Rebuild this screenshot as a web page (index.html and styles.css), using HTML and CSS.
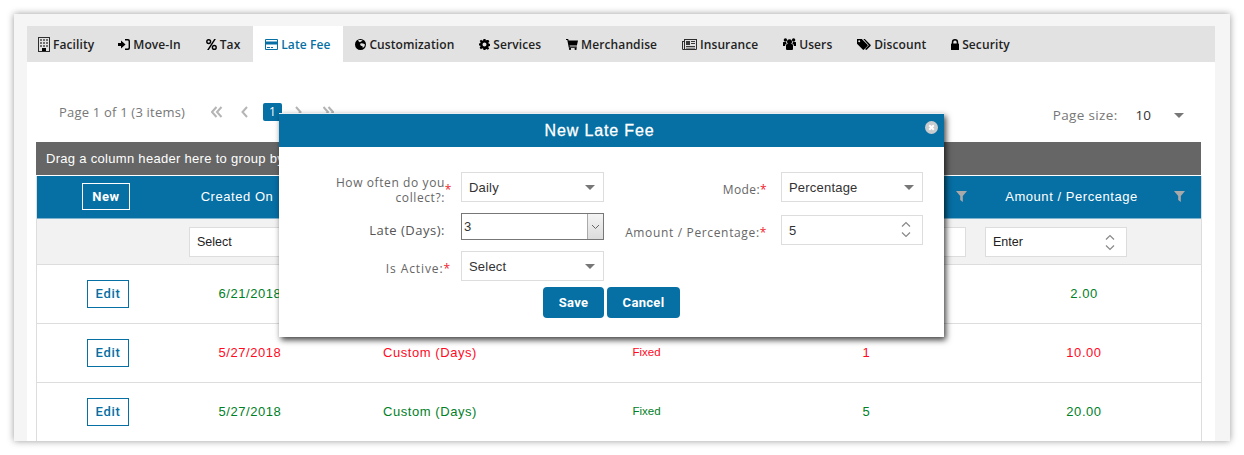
FILE: index.html
```html
<!DOCTYPE html>
<html lang="en">
<head>
    <meta charset="UTF-8">
    <title>New Late Fee</title>
    <link rel="stylesheet" href="styles.css">
</head>
<body>
    <div class="panel">
        <div class="content">
            <ul class="tabs">
                <li><svg class="ico" width="12" height="15" viewBox="0 0 12 15"><path fill-rule="evenodd" d="M0 0h12v15H0zM1 1v13h3v-3h4v3h3V1z" opacity=".8"/><path d="M2 2h2v2H2zM5 2h2v2H5zM8 2h2v2H8zM2 5h2v2H2zM5 5h2v2H5zM8 5h2v2H8zM2 8h2v2H2zM5 8h2v2H5zM8 8h2v2H8z" opacity=".5"/><path d="M4 11h4v3H4z"/></svg>Facility</li>
                <li><svg class="ico" width="12" height="11" viewBox="0 0 12 11"><path d="M0 4h3V1.500L7.500 5.500 3 9.500V7H0z"/><path d="M7 0h3a2 2 0 0 1 2 2v7a2 2 0 0 1-2 2H7V9.600h2.600a1 1 0 0 0 1-1V2.400a1 1 0 0 0-1-1H7z"/></svg>Move-In</li>
                <li><svg class="ico" width="11" height="11" viewBox="0 0 11 11"><path fill-rule="evenodd" d="M2.700 0a2.600 2.600 0 1 1 0 5.200A2.600 2.600 0 0 1 2.700 0zm0 1.400a1.200 1.200 0 1 0 0 2.400 1.200 1.200 0 0 0 0-2.400zM8.300 5.800a2.600 2.600 0 1 1 0 5.200 2.600 2.600 0 0 1 0-5.200zm0 1.400a1.200 1.200 0 1 0 0 2.400 1.200 1.200 0 0 0 0-2.400z"/><path d="M8.200 0h1.700L2.800 11H1.100z"/></svg>Tax</li>
                <li class="active"><svg class="ico" width="13" height="11" viewBox="0 0 13 11"><path fill="#066fa3" fill-rule="evenodd" d="M1 0h11a1 1 0 0 1 1 1v9a1 1 0 0 1-1 1H1a1 1 0 0 1-1-1V1a1 1 0 0 1 1-1zm0 5.500V10h11V5.500zM1 1v1.500h11V1z"/><path fill="#066fa3" d="M2 8h3v1H2zM6 8h2v1H6z"/></svg>Late Fee</li>
                <li><svg class="ico" width="11" height="11" viewBox="0 0 11 11"><path fill-rule="evenodd" d="M5.500 0a5.500 5.500 0 1 1 0 11 5.500 5.500 0 0 1 0-11zM3 1.800 4.800 3.200 6.500 2.200 7.700 1.500 6 1 3.800 1.100zM6.200 4.200 5 5 5.800 6.800 7.500 7.200 7.800 9 9.400 7.500 10 5.400 8.200 4.400z"/></svg>Customization</li>
                <li><svg class="ico" width="11" height="11" viewBox="0 0 11 11"><path fill-rule="evenodd" d="M4.500 0h2l.3 1.500 1-.5L9.400.9l1 1.700-1 1 .2 1 1.400.4v2L9.600 7.300l-.3 1 .9 1.200-1.400 1.300-1.200-.9-1 .4L6.500 11h-2l-.3-1.300-1-.4-1.200.9L.6 8.800l.9-1.200-.4-1L0 6.500v-2l1.200-.3.400-1-.9-1.100L2.100.8l1.100.9 1-.4zM5.500 3.500a2 2 0 1 0 0 4 2 2 0 0 0 0-4z"/></svg>Services</li>
                <li><svg class="ico" width="12" height="11" viewBox="0 0 12 11"><path d="M0 0h2.200l.4 1.400H12l-1.100 5H3.500l.3 1.200h7v1.100H2.800L1.300 1.100H0z"/><circle cx="4" cy="9.900" r="1.100"/><circle cx="9.600" cy="9.900" r="1.100"/></svg>Merchandise</li>
                <li><svg class="ico" width="15" height="11" viewBox="0 0 15 11"><path fill-rule="evenodd" d="M2 0h13v9.800a1.200 1.200 0 0 1-1.200 1.200H1.200A1.200 1.200 0 0 1 0 9.800V2h2zm1 1v9h10.800a.2.200 0 0 0 .2-.2V1zM1 3v6.800c0 .1.100.2.200.2H2V3z" opacity=".8"/><path d="M4 2h4v4H4zM9 2h4v1H9zM9 4h4v1H9zM4 7h9v1H4zM4 8.800h9v.7H4z" opacity=".75"/></svg>Insurance</li>
                <li><svg class="ico" width="13" height="12" viewBox="0 0 13 12"><circle cx="6.500" cy="3.800" r="2.500"/><circle cx="2.400" cy="2" r="1.700"/><circle cx="10.600" cy="2" r="1.700"/><path d="M3 7.300A1.500 1.500 0 0 1 4.500 6h4A1.500 1.500 0 0 1 10 7.300V11a1 1 0 0 1-1 1H4a1 1 0 0 1-1-1zM0 4.700C0 4 .5 4 1 4h1.900a3.500 3.500 0 0 0 1 1.500C2.700 5.700 2.200 6.400 2.100 8H0zM13 4.700c0-.7-.5-.7-1-.7h-1.900a3.500 3.500 0 0 1-1 1.500c1.200.2 1.700.9 1.800 2.500H13z"/></svg>Users</li>
                <li><svg class="ico" width="14" height="11" viewBox="0 0 14 11"><path fill-rule="evenodd" d="M0 0h4.800l5.700 5.700a1 1 0 0 1 0 1.300L7 10.600a1 1 0 0 1-1.300 0L0 4.800zM2.200 1.200a1 1 0 1 0 0 2 1 1 0 0 0 0-2z"/><path d="M6.300 0h1.500l5.700 5.700a1 1 0 0 1 0 1.300l-3.600 3.600a1 1 0 0 1-1.300 0l-.5-.5L11.800 6.300z"/></svg>Discount</li>
                <li><svg class="ico" width="8" height="11" viewBox="0 0 8 11"><path fill-rule="evenodd" d="M.8 4.500V3.200a3.200 3.200 0 0 1 6.400 0v1.300h.2a.6.600 0 0 1 .6.600v5.300a.6.600 0 0 1-.6.600H.6a.6.600 0 0 1-.6-.6V5.100a.6.600 0 0 1 .6-.6zm1.500 0h3.400V3.200a1.700 1.700 0 0 0-3.400 0z"/></svg>Security</li>
            </ul>

            <div class="pager">
                <span class="page-info">Page 1 of 1 (3 items)</span>
                <div class="page-links">
                    <svg class="chev" width="12" height="12" viewBox="0 0 12 12"><path d="M5.500 1 1 6l4.500 5M10.500 1 6 6l4.500 5"/></svg>
                    <svg class="chev prev" width="7" height="12" viewBox="0 0 7 12"><path d="M6 1 1.500 6 6 11"/></svg>
                    <span class="page-num">1</span>
                    <svg class="chev next" width="7" height="12" viewBox="0 0 7 12"><path d="M1 1l4.500 5L1 11"/></svg>
                    <svg class="chev last" width="12" height="12" viewBox="0 0 12 12"><path d="M1.500 1 6 6l-4.500 5M6.500 1 11 6l-4.500 5"/></svg>
                </div>
                <div class="page-size">
                    <span class="size-label">Page size:</span>
                    <span class="size-value">10</span>
                    <span class="caret"></span>
                </div>
            </div>

            <div class="group-bar">Drag a column header here to group by</div>

            <div class="grid">
                <div class="grid-row head">
                    <div class="cell"><button class="btn-new">New</button></div>
                    <div class="cell">Created On</div>
                    <div class="cell"></div>
                    <div class="cell"></div>
                    <div class="cell">
                        <svg class="funnel" width="11" height="11" viewBox="0 0 11 11"><path d="M0 0h11L6.800 5v6L4.200 9V5z"/></svg>
                    </div>
                    <div class="cell">Amount / Percentage
                        <svg class="funnel" width="11" height="11" viewBox="0 0 11 11"><path d="M0 0h11L6.800 5v6L4.200 9V5z"/></svg>
                    </div>
                </div>
                <div class="grid-row filters">
                    <div class="cell"></div>
                    <div class="cell"><div class="filter-box">Select</div></div>
                    <div class="cell"></div>
                    <div class="cell"></div>
                    <div class="cell"><div class="filter-box wide"></div></div>
                    <div class="cell"><div class="filter-box num">Enter
                        <svg class="spin" width="10" height="17" viewBox="0 0 10 17"><path d="M1 5.500 5 1.500l4 4M1 11.500l4 4 4-4"/></svg>
                    </div></div>
                </div>
                <div class="grid-row data green">
                    <div class="cell"><button class="btn-edit">Edit</button></div>
                    <div class="cell">6/21/2018</div>
                    <div class="cell"></div>
                    <div class="cell small"></div>
                    <div class="cell"></div>
                    <div class="cell">2.00</div>
                </div>
                <div class="grid-row data red">
                    <div class="cell"><button class="btn-edit">Edit</button></div>
                    <div class="cell">5/27/2018</div>
                    <div class="cell">Custom (Days)</div>
                    <div class="cell small">Fixed</div>
                    <div class="cell">1</div>
                    <div class="cell">10.00</div>
                </div>
                <div class="grid-row data green">
                    <div class="cell"><button class="btn-edit">Edit</button></div>
                    <div class="cell">5/27/2018</div>
                    <div class="cell">Custom (Days)</div>
                    <div class="cell small">Fixed</div>
                    <div class="cell">5</div>
                    <div class="cell">20.00</div>
                </div>
            </div>
        </div>
    </div>

    <div class="modal">
        <div class="modal-title">New Late Fee
            <svg class="close" width="13" height="13" viewBox="0 0 13 13"><circle cx="6.500" cy="6.500" r="6.500" fill="#c9ccce"/><path d="M4.200 4.200l4.600 4.600M8.800 4.200 4.200 8.800" stroke="#fff" stroke-width="2"/></svg>
        </div>
        <div class="modal-form">
            <div class="form-col">
                <div class="form-row">
                    <label class="two-line">How often do you<br>collect?:<i>*</i></label>
                    <div class="field">Daily<span class="caret"></span></div>
                </div>
                <div class="form-row late">
                    <label>Late (Days):</label>
                    <div class="field focus">3<span class="drop-btn"><svg width="9" height="6" viewBox="0 0 9 6"><path d="M1 1l3.500 3.500L8 1" fill="none" stroke="#666"/></svg></span></div>
                </div>
                <div class="form-row">
                    <label class="spaced">Is Active:<i>*</i></label>
                    <div class="field">Select<span class="caret"></span></div>
                </div>
            </div>
            <div class="form-col right">
                <div class="form-row">
                    <label>Mode:<i>*</i></label>
                    <div class="field">Percentage<span class="caret"></span></div>
                </div>
                <div class="form-row amount">
                    <label class="longer">Amount / Percentage:<i>*</i></label>
                    <div class="field">5
                        <svg class="spin" width="10" height="17" viewBox="0 0 10 17"><path d="M1 5.500 5 1.500l4 4M1 11.500l4 4 4-4"/></svg>
                    </div>
                </div>
            </div>
        </div>
        <div class="modal-actions">
            <button class="btn-save">Save</button>
            <button class="btn-save cancel">Cancel</button>
        </div>
    </div>
</body>
</html>
```

FILE: styles.css
```css
* {
    box-sizing: border-box;
}
html, body {
    margin: 0;
    height: 100%;
    overflow: hidden;
    background-color: #fff;
}
.panel {
    margin: 14px 14px 0 14px;
    height: 427px;
    padding: 12px 15px 0 13px;
    background-color: #f5f5f5;
    box-shadow: 0 0 7px rgba(0, 0, 0, 0.4);
}
.content {
    height: 415px;
    background-color: #fff;
    overflow: hidden;
}
.tabs {
    display: flex;
    margin: 0;
    padding: 0;
    list-style-type: none;
    height: 36px;
    background-color: #e2e2e2;
    font-family: "Open Sans", sans-serif;
    font-size: 12px;
    font-weight: 600;
    letter-spacing: 0.1px;
    color: #222;
}
.tabs li {
    display: flex;
    align-items: center;
    gap: 3px;
    padding: 0 12.45px;
}
.tabs li:first-child {
    padding-left: 11px;
    padding-right: 11.5px;
}
.tabs li.active {
    background-color: #fff;
    color: #066fa3;
}
.ico {
    flex-shrink: 0;
}
.pager {
    display: flex;
    align-items: center;
    height: 80px;
    padding: 20px 0 0 32px;
    font-family: "Open Sans", sans-serif;
    font-size: 13px;
    letter-spacing: 0.2px;
    color: #777;
}
.page-info {
    width: 152px;
}
.page-links {
    display: flex;
    align-items: center;
}
.chev {
    fill: none;
    stroke: #b5b5b5;
    stroke-width: 2;
}
.chev.prev {
    margin-left: 18px;
}
.chev.next {
    margin-left: 13px;
}
.chev.last {
    margin-left: 20px;
}
.page-num {
    width: 19px;
    height: 18px;
    margin-left: 15px;
    background-color: #066fa3;
    color: #fff;
    text-align: center;
    font-size: 12px;
    line-height: 18px;
    border-radius: 2px;
}
.page-size {
    display: flex;
    align-items: center;
    margin-left: auto;
    padding: 6px 31px 0 0;
    font-size: 13.5px;
    letter-spacing: 0;
}
.size-label {
    letter-spacing: 0.35px;
}
.size-value {
    margin: 0 23px 0 18px;
    color: #333;
}
.caret {
    display: inline-block;
    width: 0;
    height: 0;
    border-left: 5px solid transparent;
    border-right: 5px solid transparent;
    border-top: 5px solid #777;
}
.group-bar {
    width: 1165px;
    margin-left: 9px;
    height: 33px;
    padding-left: 10px;
    line-height: 33px;
    background-color: #666;
    color: #fff;
    font-family: "Liberation Sans", sans-serif;
    font-size: 13px;
    letter-spacing: 0.3px;
    white-space: nowrap;
    overflow: hidden;
}
.grid {
    width: 1166px;
    margin: 1px 0 0 9px;
    border-left: 1px solid #ddd;
    border-right: 1px solid #ddd;
    font-family: "Liberation Sans", sans-serif;
    font-size: 13px;
    letter-spacing: 0.55px;
}
.grid-row {
    display: grid;
    grid-template-columns: 138px 150px 210px 223px 217px 1fr;
    border-bottom: 1px solid #ddd;
}
.cell {
    position: relative;
    display: flex;
    align-items: center;
    justify-content: center;
}
.head {
    height: 43px;
    background-color: #066fa3;
    color: #fff;
    border-bottom: 1px solid #7fb2cc;
}
.head .cell {
    padding-bottom: 2px;
}
.head .cell:nth-child(2) {
    padding-right: 26px;
}
.head .cell:nth-child(6) {
    padding-right: 33px;
}
.btn-new {
    width: 48px;
    height: 27px;
    padding: 0;
    background: transparent;
    border: 1px solid #fff;
    color: #fff;
    font-family: "Roboto", sans-serif;
    font-size: 13px;
    font-weight: 700;
    letter-spacing: 0.6px;
}
.funnel {
    position: absolute;
    top: 15px;
    right: 9px;
    fill: #a9a9a9;
}
.head .cell:nth-child(5) .funnel {
    right: 8px;
}
.head .cell:nth-child(6) .funnel {
    right: 16px;
}
.filters {
    height: 46px;
    background-color: #f2f2f2;
}
.filters .cell {
    justify-content: flex-start;
    padding-left: 14px;
}
.filters .cell:nth-child(5) {
    padding-left: 10px;
}
.filters .cell:nth-child(6) {
    padding-left: 10px;
}
.filter-box {
    position: relative;
    display: flex;
    align-items: center;
    width: 142px;
    height: 30px;
    padding-left: 7px;
    background-color: #fff;
    border: 1px solid #ddd;
    color: #222;
    font-size: 12.5px;
    letter-spacing: 0;
}
.filter-box.wide {
    width: 198px;
}
.spin {
    position: absolute;
    top: 6px;
    right: 11px;
    fill: none;
    stroke: #888;
    stroke-width: 1.2;
}
.data {
    height: 59px;
}
.data .cell {
    padding-bottom: 2px;
}
.green {
    color: #008026;
}
.red {
    color: #ff0a1e;
}
.data .cell:first-child {
    padding: 0 0 0 4px;
}
.data .cell:nth-child(6) {
    padding-right: 8px;
}
.small {
    font-size: 11.5px;
    letter-spacing: 0;
}
.btn-edit {
    width: 42px;
    height: 28px;
    padding: 0 0 2px 0;
    background-color: #fff;
    border: 1px solid #066fa3;
    color: #066fa3;
    font-family: "Roboto", sans-serif;
    font-size: 13px;
    font-weight: 500;
    letter-spacing: 0.7px;
}
.modal {
    position: absolute;
    top: 113px;
    left: 279px;
    width: 665px;
    height: 224px;
    background-color: #fff;
    box-shadow: 2px 3px 6px rgba(0, 0, 0, 0.75);
}
.modal-title {
    position: relative;
    height: 34px;
    padding-right: 24px;
    border-top: 1px solid #e8eef2;
    background-color: #066fa3;
    color: #fff;
    text-align: center;
    line-height: 33px;
    font-family: "Liberation Sans", sans-serif;
    font-size: 16px;
    letter-spacing: 0.85px;
    -webkit-text-stroke: 0.3px #fff;
}
.close {
    position: absolute;
    top: 7px;
    right: 6px;
}
.modal-form {
    display: flex;
    padding-top: 25px;
}
.form-col {
    display: flex;
    flex-direction: column;
    gap: 11px;
    width: 325px;
}
.form-col.right {
    width: 319px;
}
.form-row {
    display: flex;
    align-items: center;
    height: 30px;
}
.form-row.late {
    height: 27px;
}
.form-row.amount {
    margin-top: 2px;
}
.form-row label {
    flex: 1;
    padding-top: 4px;
    text-align: right;
    font-family: "Open Sans", sans-serif;
    font-size: 12px;
    letter-spacing: 0.4px;
    color: #666;
    line-height: 15px;
    white-space: nowrap;
}
.form-row label.two-line {
    position: relative;
    padding: 0 6px 0 0;
    line-height: 15px;
    letter-spacing: 0.6px;
    margin-top: 6px;
}
.form-row label.two-line i {
    position: absolute;
    top: 7px;
    right: -1px;
}
.form-row label.spaced {
    letter-spacing: 0.9px;
}
.form-row label.longer {
    letter-spacing: 0.65px;
}
.form-row.late label {
    padding: 7px 6px 0 0;
    font-size: 13px;
    letter-spacing: 0.5px;
    color: #555;
}
.form-row label i {
    color: #f01c2c;
    font-style: normal;
}
.field {
    position: relative;
    display: flex;
    align-items: center;
    justify-content: space-between;
    flex-shrink: 0;
    width: 143px;
    height: 100%;
    margin-left: 10px;
    padding: 0 8px 0 7px;
    border: 1px solid #ddd;
    font-family: "Liberation Sans", sans-serif;
    font-size: 13px;
    letter-spacing: 0.2px;
    color: #333;
}
.right .field {
    width: 142px;
    margin-left: 14px;
}
.field .spin {
    top: 5px;
    right: 11px;
}
.field.focus {
    padding: 0 0 0 2px;
    border: 1px solid #777;
    font-size: 13px;
}
.drop-btn {
    display: flex;
    align-items: center;
    justify-content: center;
    width: 16px;
    height: 100%;
    border-left: 1px solid #aaa;
    background: linear-gradient(#f4f4f4, #dcdcdc);
}
.modal-actions {
    display: flex;
    gap: 3px;
    margin-top: 6px;
    padding-left: 264px;
}
.btn-save {
    width: 61px;
    height: 31px;
    padding: 0;
    background-color: #066fa3;
    border: none;
    border-radius: 4px;
    color: #fff;
    font-family: "Roboto", sans-serif;
    font-size: 13px;
    font-weight: 700;
    letter-spacing: 0.3px;
}
.btn-save.cancel {
    width: 73px;
}
```
